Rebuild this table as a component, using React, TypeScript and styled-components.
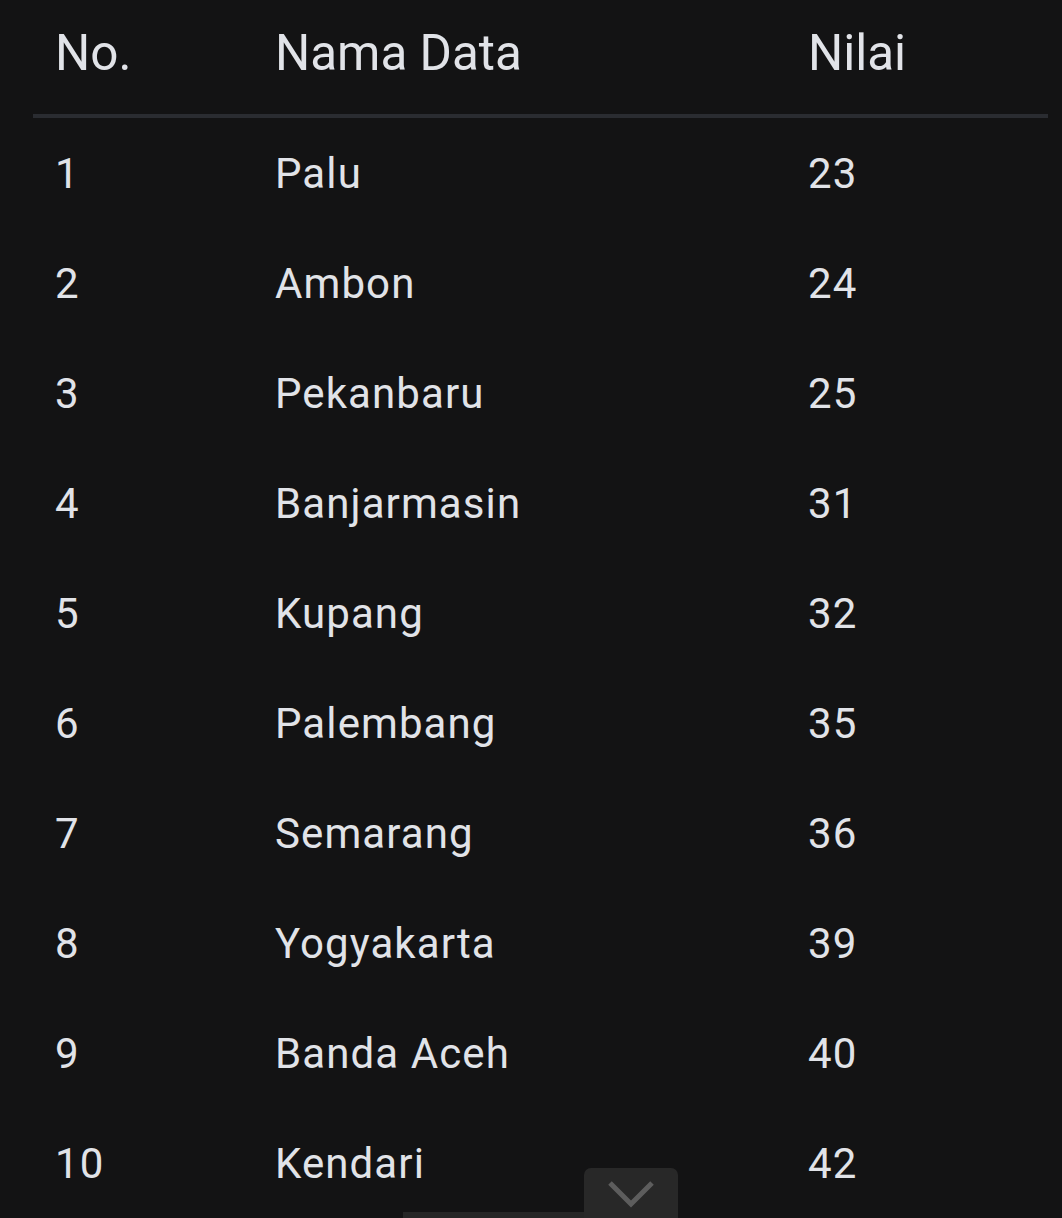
import React from "react";
import styled, { createGlobalStyle } from "styled-components";

const GlobalStyle = createGlobalStyle`
  html, body {
    margin: 0;
    padding: 0;
    background: #131314;
    overflow: hidden;
  }
  body {
    font-family: Roboto, "Liberation Sans", sans-serif;
    color: #e2e3e8;
  }
`;

const Page = styled.div`
  position: relative;
  height: 1218px;
  padding: 0 14px 0 33px;
  box-sizing: border-box;
  background: #131314;
`;

const Grid = styled.div`
  display: grid;
  grid-template-columns: 220px 533px 1fr;
`;

const HeadCell = styled.div`
  font-size: 49.4px;
  line-height: 60px;
  padding: 23px 0 31px 22px;
  border-bottom: 4px solid #2a2c31;
  color: #e1e3e8;
  font-weight: 400;
`;

const Cell = styled.div`
  font-size: 42px;
  line-height: 110px;
  height: 110px;
  padding: 1px 0 0 22px;
  box-sizing: border-box;
  color: #e1e3e8;
  white-space: nowrap;
  letter-spacing: 1.1px;
`;

const BottomDock = styled.div`
  position: absolute;
  left: 403px;
  bottom: 0;
  display: flex;
  align-items: flex-end;
`;

const Track = styled.div`
  width: 181px;
  height: 6px;
  background: #262626;
`;

const ScrollButton = styled.button`
  width: 94px;
  height: 50px;
  border: none;
  padding: 0;
  background: #282828;
  border-radius: 7px 7px 0 0;
  display: flex;
  align-items: flex-start;
  justify-content: center;
  cursor: pointer;
`;

const Chevron = styled.svg`
  margin-top: 12px;
`;

const rows: [number, string, number][] = [
  [1, "Palu", 23],
  [2, "Ambon", 24],
  [3, "Pekanbaru", 25],
  [4, "Banjarmasin", 31],
  [5, "Kupang", 32],
  [6, "Palembang", 35],
  [7, "Semarang", 36],
  [8, "Yogyakarta", 39],
  [9, "Banda Aceh", 40],
  [10, "Kendari", 42],
];

export default function App() {
  return (
    <>
      <GlobalStyle />
      <Page>
        <Grid>
          <HeadCell>No.</HeadCell>
          <HeadCell>Nama Data</HeadCell>
          <HeadCell>Nilai</HeadCell>
          {rows.map(([n, name, v]) => (
            <React.Fragment key={n}>
              <Cell>{n}</Cell>
              <Cell>{name}</Cell>
              <Cell>{v}</Cell>
            </React.Fragment>
          ))}
        </Grid>
        <BottomDock>
          <Track />
          <ScrollButton aria-label="Scroll down">
            <Chevron width="48" height="28" viewBox="0 0 48 28">
              <polyline
                points="3,3 24,24 45,3"
                fill="none"
                stroke="#5d5d5d"
                strokeWidth="5"
              />
            </Chevron>
          </ScrollButton>
        </BottomDock>
      </Page>
    </>
  );
}
